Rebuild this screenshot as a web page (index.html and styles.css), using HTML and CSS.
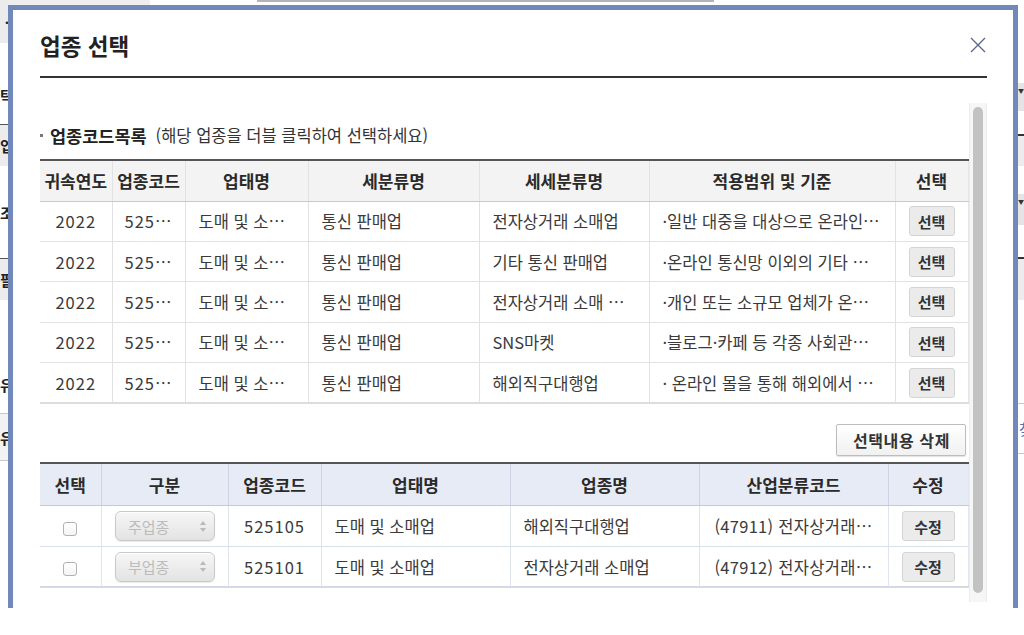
FILE: index.html
```html
<!DOCTYPE html>
<html lang="ko">
<head>
<meta charset="utf-8">
<title>업종 선택</title>
<link rel="stylesheet" href="styles.css">
</head>
<body>
<div class="backdrop">
  <div class="strip strip-left">
    <div class="cell c-gray h43"><span class="ch">ㆍ</span></div>
    <div class="cell h81 end"><span class="ch">탁</span></div>
    <div class="cell c-gray line-dark h42"><span class="ch">업</span></div>
    <div class="cell h92"><span class="ch">조</span></div>
    <div class="cell c-gray line-dark h42"><span class="ch">필</span></div>
    <div class="cell h113 end"><span class="ch">유</span></div>
    <div class="cell c-light line-soft h47"><span class="ch">유</span></div>
    <div class="cell line-soft fill"></div>
  </div>
  <div class="backdrop-center">
    <div class="topbar">
      <span class="tb-block"></span>
      <span class="tb-gap"></span>
      <span class="tb-line"></span>
    </div>
  </div>
  <div class="strip strip-right">
    <div class="cell h83"></div>
    <div class="cell c-mid h28"><span class="arr">▼</span></div>
    <div class="cell h23"></div>
    <div class="cell c-gray line-black h32"></div>
    <div class="cell h28"></div>
    <div class="cell c-mid h31"><span class="arr">▼</span></div>
    <div class="cell h32"></div>
    <div class="cell c-gray line-black h43"></div>
    <div class="cell h103"></div>
    <div class="cell line-soft h50"><span class="ch link">찾</span></div>
    <div class="cell line-soft fill"></div>
  </div>
</div>

<div class="modal" role="dialog" aria-labelledby="modal-title">
  <div class="modal-head">
    <h1 class="modal-title" id="modal-title">업종 선택</h1>
    <button class="close" type="button" aria-label="닫기">
      <svg width="16" height="16" viewBox="0 0 16 16" aria-hidden="true"><path d="M1 1L15 15M15 1L1 15" stroke="#5d6382" stroke-width="1.3" fill="none"/></svg>
    </button>
  </div>

  <div class="modal-body">
    <div class="scroll-content">
      <div class="section-title">
        <span class="dot"></span>
        <strong>업종코드목록</strong>
        <span class="hint">(해당 업종을 더블 클릭하여 선택하세요)</span>
      </div>

      <table class="grid list">
        <colgroup>
          <col class="w72"><col class="w73"><col class="w123"><col class="w171"><col class="w170"><col class="w246"><col class="w73">
        </colgroup>
        <thead>
          <tr><th>귀속연도</th><th>업종코드</th><th>업태명</th><th>세분류명</th><th>세세분류명</th><th>적용범위 및 기준</th><th>선택</th></tr>
        </thead>
        <tbody>
          <tr><td class="c num">2022</td><td class="c num">525⋯</td><td>도매 및 소⋯</td><td>통신 판매업</td><td>전자상거래 소매업</td><td>·일반 대중을 대상으로 온라인⋯</td><td class="c"><button class="btn-sm" type="button">선택</button></td></tr>
          <tr><td class="c num">2022</td><td class="c num">525⋯</td><td>도매 및 소⋯</td><td>통신 판매업</td><td>기타 통신 판매업</td><td>·온라인 통신망 이외의 기타 ⋯</td><td class="c"><button class="btn-sm" type="button">선택</button></td></tr>
          <tr><td class="c num">2022</td><td class="c num">525⋯</td><td>도매 및 소⋯</td><td>통신 판매업</td><td>전자상거래 소매 ⋯</td><td>·개인 또는 소규모 업체가 온⋯</td><td class="c"><button class="btn-sm" type="button">선택</button></td></tr>
          <tr><td class="c num">2022</td><td class="c num">525⋯</td><td>도매 및 소⋯</td><td>통신 판매업</td><td>SNS마켓</td><td>·블로그·카페 등 각종 사회관⋯</td><td class="c"><button class="btn-sm" type="button">선택</button></td></tr>
          <tr><td class="c num">2022</td><td class="c num">525⋯</td><td>도매 및 소⋯</td><td>통신 판매업</td><td>해외직구대행업</td><td>· 온라인 몰을 통해 해외에서 ⋯</td><td class="c"><button class="btn-sm" type="button">선택</button></td></tr>
        </tbody>
      </table>

      <div class="actions">
        <button class="btn-delete" type="button">선택내용 삭제</button>
      </div>

      <table class="grid chosen">
        <colgroup>
          <col class="w61"><col class="w127"><col class="w93"><col class="w189"><col class="w189"><col class="w189"><col class="w80">
        </colgroup>
        <thead>
          <tr><th>선택</th><th>구분</th><th>업종코드</th><th>업태명</th><th>업종명</th><th>산업분류코드</th><th>수정</th></tr>
        </thead>
        <tbody>
          <tr>
            <td class="c"><input class="chk" type="checkbox" aria-label="선택"></td>
            <td class="c"><div class="select"><span>주업종</span><svg width="6" height="11" viewBox="0 0 6 11" aria-hidden="true"><path d="M3 0L6 4H0Z M0 7H6L3 11Z" fill="#b9b9b9"/></svg></div></td>
            <td class="c num">525105</td>
            <td>도매 및 소매업</td>
            <td>해외직구대행업</td>
            <td class="c code">(47911) 전자상거래⋯</td>
            <td class="c"><button class="btn-sm wide" type="button">수정</button></td>
          </tr>
          <tr>
            <td class="c"><input class="chk" type="checkbox" aria-label="선택"></td>
            <td class="c"><div class="select"><span>부업종</span><svg width="6" height="11" viewBox="0 0 6 11" aria-hidden="true"><path d="M3 0L6 4H0Z M0 7H6L3 11Z" fill="#b9b9b9"/></svg></div></td>
            <td class="c num">525101</td>
            <td>도매 및 소매업</td>
            <td>전자상거래 소매업</td>
            <td class="c code">(47912) 전자상거래⋯</td>
            <td class="c"><button class="btn-sm wide" type="button">수정</button></td>
          </tr>
        </tbody>
      </table>
    </div>
    <div class="scrollbar"><div class="thumb"></div></div>
  </div>
</div>
</body>
</html>
```

FILE: styles.css
```css
* { box-sizing: border-box; }

html, body {
  margin: 0;
  padding: 0;
}

body {
  width: 1024px;
  height: 635px;
  overflow: hidden;
  position: relative;
  background: #fff;
  color: #333;
  font-family: "Noto Sans CJK KR", "Noto Sans", sans-serif;
}

/* ---------- page behind the dialog ---------- */
.backdrop {
  display: flex;
  height: 635px;
}

.backdrop-center {
  flex: 1;
}

.topbar {
  display: flex;
  align-items: flex-start;
}

.tb-block {
  width: 142px;
  height: 5px;
  background: #eeeeee;
}

.tb-gap {
  width: 107px;
}

.tb-line {
  width: 457px;
  height: 2px;
  background: #b4b4b4;
}

.strip {
  display: flex;
  flex-direction: column;
}

.strip-left { width: 8px; }
.strip-right { width: 6px; }

.cell {
  display: flex;
  align-items: center;
  font-size: 15px;
  font-weight: 700;
  color: #222;
  white-space: nowrap;
}

.cell.end { align-items: flex-end; padding-bottom: 18px; }

.strip-right .ch { margin-left: 1px; }

.ch.link { color: #4d6fb5; font-weight: 400; }

.arr {
  font-size: 6px;
  line-height: 1;
  color: #333;
  margin-left: 0;
  align-self: flex-start;
  margin-top: 5px;
}

.c-gray { background: #ececec; }
.c-mid { background: #e4e4e4; }
.c-light { background: #f2f2f2; }

.line-dark { border-top: 1px solid #555; }
.line-black { border-top: 2px solid #333; }
.line-soft { border-top: 1px solid #c8c8c8; }

.h23 { height: 23px; }
.h28 { height: 28px; }
.h31 { height: 31px; }
.h32 { height: 32px; }
.h42 { height: 42px; }
.h43 { height: 43px; }
.h47 { height: 47px; }
.h50 { height: 50px; }
.h81 { height: 81px; }
.h83 { height: 83px; }
.h92 { height: 92px; }
.h103 { height: 103px; }
.h113 { height: 113px; }
.fill { flex: 1; }

/* ---------- dialog ---------- */
.modal {
  position: absolute;
  left: 8px;
  top: 5px;
  width: 1010px;
  height: 603px;
  border: 5px solid #7189ba;
  border-bottom: 0;
  background: #fff;
  padding: 0 26px 0 27px;
}

.modal-head {
  display: flex;
  align-items: center;
  justify-content: space-between;
  height: 68px;
  padding-top: 4px;
  border-bottom: 2px solid #333;
}

.modal-title {
  margin: 0;
  font-size: 22.5px;
  font-weight: 700;
  color: #222;
}

.close {
  width: 16px;
  height: 16px;
  padding: 0;
  margin-right: 1px;
  border: 0;
  background: none;
  display: flex;
}

.modal-body {
  display: flex;
  margin-top: 25px;
  height: 499px;
}

.scroll-content {
  width: 928px;
}

.scrollbar {
  width: 19px;
  height: 499px;
  margin-left: 1px;
  background: #f6f6f6;
  border-left: 1px solid #ececec;
  border-right: 1px solid #ececec;
  padding: 4px 3px 9px 3px;
}

.thumb {
  height: 100%;
  border-radius: 6px;
  background: #c2c2c2;
}

/* ---------- section title ---------- */
.section-title {
  display: flex;
  align-items: center;
  height: 20px;
  margin-top: 22px;
  margin-bottom: 14px;
}

.dot {
  width: 3px;
  height: 3px;
  background: #777;
  margin-right: 7px;
}

.section-title strong {
  font-size: 17.5px;
  font-weight: 700;
  color: #222;
}

.hint {
  font-size: 16.5px;
  color: #333;
  margin-left: 9px;
}

/* ---------- tables ---------- */
.grid {
  width: 928px;
  border-collapse: collapse;
  table-layout: fixed;
  border-top: 2px solid #555;
}

.w61 { width: 61px; }
.w72 { width: 72px; }
.w73 { width: 73px; }
.w80 { width: 80px; }
.w93 { width: 93px; }
.w123 { width: 123px; }
.w127 { width: 127px; }
.w170 { width: 170px; }
.w171 { width: 171px; }
.w189 { width: 189px; }
.w246 { width: 246px; }

.grid th,
.grid td {
  white-space: nowrap;
  overflow: hidden;
  text-overflow: clip;
  font-size: 16.5px;
  padding: 0 12px 0 13px;
  text-align: left;
}

.grid th {
  font-size: 17px;
  font-weight: 700;
  color: #2a2a2a;
  text-align: center;
  padding: 0;
}

.grid td { color: #3a3a3a; }

.grid td.c { text-align: center; padding: 0 2px; }

.grid td.num { letter-spacing: 1px; }

.grid td.code { letter-spacing: 0.3px; }

.list th {
  height: 41px;
  background: #f3f3f3;
  border-bottom: 1px solid #c9c9c9;
  border-left: 1px solid #e2e2e2;
}

.list td {
  height: 40.4px;
  border-bottom: 1px solid #e2e2e2;
  border-left: 1px solid #e2e2e2;
}

.list th:first-child,
.list td:first-child { border-left: 0; }

.list th:last-child,
.list td:last-child { border-right: 1px solid #e6e6e6; }

.list tbody tr:last-child td { border-bottom: 2px solid #dcdcdc; }

.chosen th {
  height: 43px;
  background: #e7ebf5;
  border-bottom: 1px solid #c2cad9;
  border-left: 1px solid #cdd5e4;
}

.chosen td {
  height: 40.6px;
  border-bottom: 1px solid #d9dfea;
  border-left: 1px solid #dfe4ee;
}

.chosen th:first-child,
.chosen td:first-child { border-left: 0; }

.chosen th:last-child,
.chosen td:last-child { border-right: 1px solid #e2e6ef; }

.chosen tbody tr:last-child td { border-bottom: 2px solid #d3d9e5; }

/* ---------- controls ---------- */
.btn-sm {
  width: 46px;
  height: 30px;
  padding: 0;
  font-family: inherit;
  font-size: 15px;
  font-weight: 700;
  color: #333;
  background: #ebebeb;
  border: 1px solid #d4d4d4;
  border-radius: 3px;
  vertical-align: middle;
  letter-spacing: 0;
}

.btn-sm.wide { width: 53px; }

.actions {
  display: flex;
  justify-content: flex-end;
  padding-right: 2px;
  margin-top: 20px;
  margin-bottom: 6px;
}

.btn-delete {
  width: 130px;
  height: 32px;
  padding: 0 0 0 1px;
  font-family: inherit;
  font-size: 16px;
  font-weight: 700;
  letter-spacing: 0.6px;
  color: #333;
  background: linear-gradient(#ffffff, #f1f1f1);
  border: 1px solid #bdbdbd;
  border-radius: 2px;
  box-shadow: 0 1px 1px rgba(0, 0, 0, 0.12);
}

.chk {
  appearance: none;
  -webkit-appearance: none;
  width: 14px;
  height: 14px;
  margin: 0;
  border: 1px solid #b3b3b3;
  border-radius: 3px;
  background: linear-gradient(#ffffff, #f4f4f4);
  vertical-align: middle;
}

.select {
  display: inline-flex;
  align-items: center;
  justify-content: space-between;
  width: 100px;
  height: 30px;
  padding: 0 8px 0 12px;
  margin-left: 1px;
  border: 1px solid #c9c9c9;
  border-radius: 6px;
  background: linear-gradient(#f6f6f6, #e3e3e3);
  box-shadow: inset 0 1px 0 #fff, 0 1px 1px rgba(0,0,0,0.08);
  color: #bcbcbc;
  font-size: 15px;
  letter-spacing: 0;
  vertical-align: middle;
}
```
